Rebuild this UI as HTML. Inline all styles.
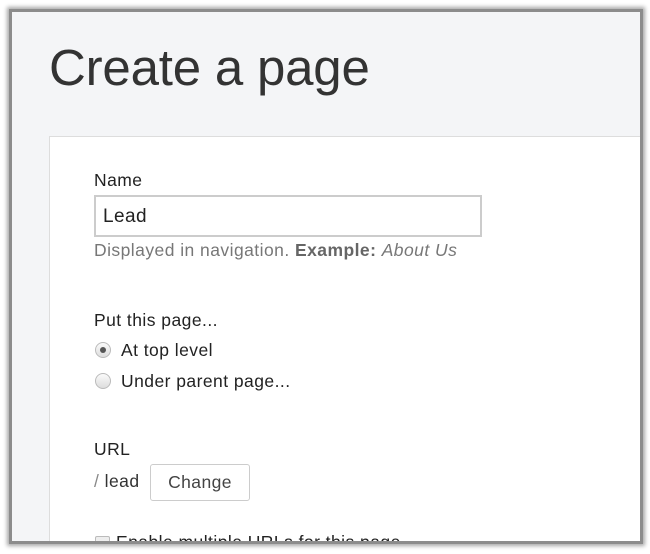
<!DOCTYPE html>
<html><head><style>
*{margin:0;padding:0;box-sizing:border-box}
html,body{width:650px;height:554px;overflow:hidden}
body{background:#fff;position:relative;font-family:"Liberation Sans",sans-serif;color:#222}
.frame{position:absolute;left:9px;top:9px;width:634px;height:535px;border:3px solid #8c8c8c;box-shadow:0 0 4px 2px rgba(0,0,0,.35);background:#f4f5f7;overflow:hidden}
.t{position:absolute;left:37px;top:26px;font-size:51px;color:#333;letter-spacing:-.2px}
.card{position:absolute;left:37px;top:124px;width:640px;height:420px;background:#fff;border:1px solid #ddd}
.a{position:absolute;font-size:17.5px;white-space:nowrap;letter-spacing:.45px}
.inp{position:absolute;left:82px;top:183px;width:388px;height:42px;border:2px solid #ccc;background:#fff}
.radio{position:absolute;left:83px;width:16px;height:16px;border-radius:50%;border:1px solid #bbb;background:linear-gradient(#fafafa,#ddd)}
.btn{position:absolute;left:138px;top:452px;width:100px;height:37px;border:1px solid #ccc;border-radius:3px;background:#fff;font-size:17.5px;letter-spacing:.4px;text-align:center;line-height:35px;color:#444}
</style></head><body>
<div class="frame">
<div class="t">Create a page</div>
<div class="card"></div>
<div class="a" style="left:82px;top:158px">Name</div>
<div class="inp"></div>
<div class="a" style="left:91px;top:194px;font-size:19px">Lead</div>
<div class="a" style="left:82px;top:228px;color:#777">Displayed in navigation. <b style="color:#666">Example:</b> <i>About Us</i></div>
<div class="a" style="left:82px;top:298px">Put this page...</div>
<div class="radio" style="top:330px"><div style="position:absolute;left:4px;top:4px;width:6px;height:6px;border-radius:50%;background:#555"></div></div>
<div class="a" style="left:109px;top:328px">At top level</div>
<div class="radio" style="top:361px"></div>
<div class="a" style="left:109px;top:359px">Under parent page...</div>
<div class="a" style="left:82px;top:427px">URL</div>
<div class="a" style="left:82px;top:459px;color:#333"><span style="color:#888">/</span> lead</div>
<div class="btn">Change</div>
<div style="position:absolute;left:83px;top:524px;width:15px;height:15px;border:1px solid #bbb;border-radius:2px;background:#eee"></div>
<div class="a" style="left:104px;top:520px">Enable multiple URLs for this page</div>
</div>
</body></html>
